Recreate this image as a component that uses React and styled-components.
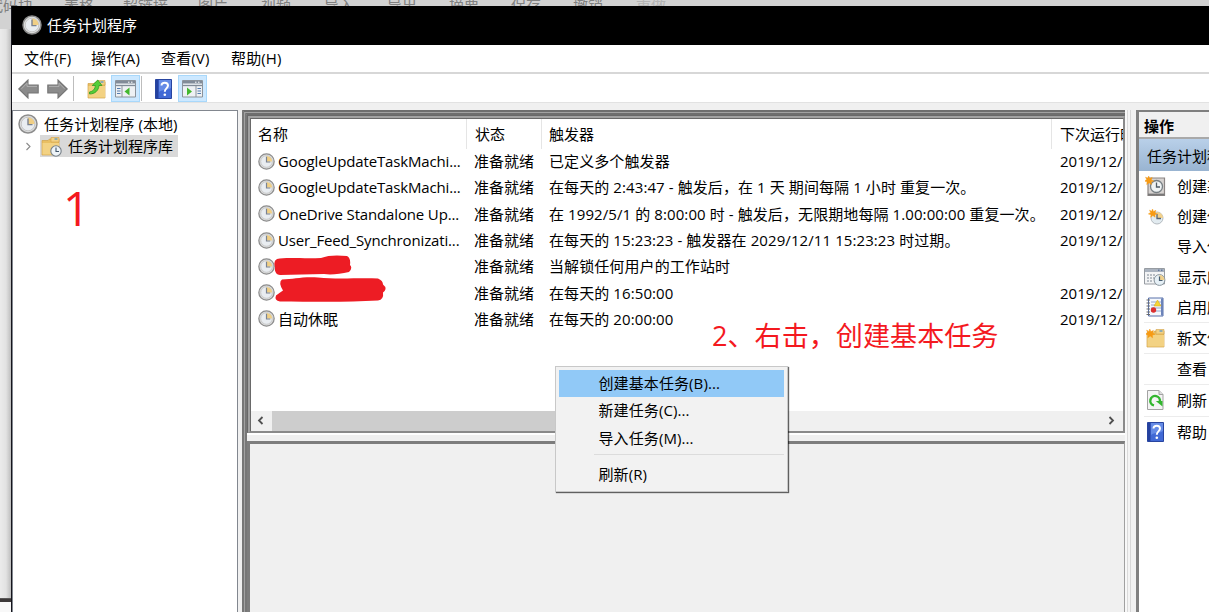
import React from 'react';
import styled, { createGlobalStyle } from 'styled-components';

const GlobalStyle = createGlobalStyle`
  * {
    box-sizing: border-box;
  }

  body {
    margin: 0;
    overflow: hidden;
    font-family: 'Open Sans', 'Noto Sans CJK SC', sans-serif;
    font-size: 15px;
    line-height: 20px;
    color: #000;
  }
`;

const Desktop = styled.div`
  position: relative;
  width: 1209px;
  height: 612px;
  padding: 6px 0 0 11px;
  overflow: hidden;
  background: linear-gradient(#d2d2d2, #d2d2d2) 0 0 / 100% 29px no-repeat,
    linear-gradient(transparent 598px, #777 598px, #3c3838 599px, #3c3838 602px, #f8f8f8 602px),
    linear-gradient(90deg, #ebebeb 0, #e2e2e2 6px, #bdbdbd 11px);
`;

const Backdrop = styled.div`
  position: absolute;
  top: -5px;
  left: ${({ left }) => left}px;
  color: ${({ faded }) => (faded ? '#b4b4b4' : '#808080')};
  white-space: nowrap;
`;

const Window = styled.div`
  position: relative;
  display: flex;
  flex-direction: column;
  height: 606px;
  border-left: 1px solid #15151c;
  background: #f0f0f0;
`;

const TitleBar = styled.header`
  display: flex;
  align-items: center;
  gap: 5px;
  flex: 0 0 39px;
  padding: 0 0 2px 10px;
  background: #000;
  color: #fff;
`;

const MenuBar = styled.nav`
  display: flex;
  align-items: center;
  gap: 20px;
  flex: 0 0 29px;
  padding: 0 0 1px 12px;
  background: #fff;
  border-bottom: 2px solid #d7d7d7;
`;

const MenuItem = styled.span`
  width: ${({ width }) => width}px;
  white-space: nowrap;
  letter-spacing: 0.15px;
`;

const Toolbar = styled.div`
  display: flex;
  align-items: center;
  flex: 0 0 29px;
  padding: 1px 0 0 6px;
  background: #fff;
  border-bottom: 1px solid #e2e2e2;

  svg {
    display: block;
    flex: none;
  }
`;

const ToolButton = styled.span`
  display: flex;
  align-items: center;
  justify-content: center;
  width: ${({ width }) => width || 29}px;
  height: 27px;
  border: 1px solid ${({ active }) => (active ? '#a8d8fb' : 'transparent')};
  background: ${({ active }) => (active ? '#cce8ff' : 'transparent')};
`;

const ArrowPair = styled.span`
  display: flex;
  gap: 8px;
`;

const ToolDivider = styled.span`
  width: 1px;
  height: 25px;
  margin: 0 ${({ right }) => right}px 0 ${({ left }) => left}px;
  background: #bdbdbd;
`;

const Panels = styled.main`
  display: flex;
  flex: 1;
  padding-top: 7px;
  min-height: 0;
`;

const Tree = styled.aside`
  flex: 0 0 226px;
  margin-right: 4px;
  border: 1px solid #82878f;
  border-bottom: 0;
  background: #fff;
  padding: 1px 0 0 5px;
`;

const TreeRoot = styled.div`
  display: flex;
  align-items: center;
  gap: 6px;
  height: 23px;
  letter-spacing: 0.08px;
`;

const TreeRow = styled.div`
  display: flex;
  align-items: center;
  height: 22px;
  padding-left: 6px;
`;

const TreeLabel = styled.span`
  display: flex;
  align-items: center;
  gap: 6px;
  height: 22px;
  width: 138px;
  margin-left: 7px;
  padding-left: 1px;
  background: #d9d9d9;
  white-space: nowrap;
`;

const Center = styled.section`
  display: flex;
  flex-direction: column;
  flex: 0 0 883px;
  border-left: 5px double #777;
  border-top: 5px double #6e6e6e;
  background: #a2a2a2;
`;

const Sash = styled.div`
  flex: 0 0 11px;
  background: linear-gradient(
    90deg,
    #f8f8f8 2px,
    #dadada 2px,
    #dadada 3px,
    #f4f4f4 3px,
    #f4f4f4 5px,
    #d6d6d6 5px,
    #d6d6d6 6px,
    #f0f0f0 6px
  );
`;

const ListFrame = styled.div`
  display: flex;
  flex-direction: column;
  flex: 0 0 318px;
  border: 2px solid #8a8a8a;
  border-width: 4px 2px 2px 4px;
  border-top: 4px double #696969;
  border-left: 4px double #696969;
  background: #fff padding-box;
`;

const Columns = styled.div`
  display: grid;
  grid-template-columns: 216px 75px 510px 1fr;
  height: ${({ head }) => (head ? '30px' : '26.3px')};
  align-items: center;
  overflow: hidden;
`;

const HeadCell = styled.div`
  height: 30px;
  padding: 5px 0 0 ${({ inset }) => inset || 7}px;
  border-right: 1px solid #e5e5e5;
  white-space: nowrap;
  overflow: hidden;

  &:last-child {
    border-right: 0;
  }
`;

const Cell = styled.div`
  display: flex;
  align-items: center;
  gap: 3px;
  padding-left: ${({ inset }) => inset || 7}px;
  white-space: nowrap;
  overflow: hidden;
  letter-spacing: ${({ spacing }) => spacing || 0}px;

  svg {
    flex: none;
  }
`;

const Rows = styled.div`
  flex: 1;
  margin-top: -1px;
  overflow: hidden;
`;

const ScrollBar = styled.div`
  display: flex;
  align-items: center;
  height: 20px;
  background: #f0f0f0;
`;

const ScrollArrow = styled.span`
  display: flex;
  justify-content: center;
  width: 21px;
  padding: 0 2px 2px 0;
`;

const Thumb = styled.span`
  width: 420px;
  height: 20px;
  margin-right: auto;
  background: #cdcdcd;
`;

const Splitter = styled.div`
  flex: 0 0 8px;
  background: #f0f0f0;
  border-top: 2px solid #fff;
`;

const Detail = styled.div`
  flex: 1;
  border: 3px solid #7d7d7d;
  border-width: 3px 1px 0 3px;
  border-right-color: #a0a0a0;
  background: #f0f0f0;
`;

const Actions = styled.aside`
  flex: 1;
  border: 2px solid #7f7f7f;
  border-width: 2px 0 0 3px;
  background: #fff;
  overflow: hidden;
  min-width: 0;
`;

const ActionsHead = styled.div`
  height: 27px;
  padding: 4px 0 0 5px;
  background: #f0f0f0;
  border-bottom: 2px solid #a9a9a9;
  font-weight: 700;
`;

const ActionsTitle = styled.div`
  height: 32px;
  padding: 7px 0 0 8px;
  background: linear-gradient(#b9d0e9, #99b4d1);
  white-space: nowrap;
`;

const ActionRow = styled.div`
  display: flex;
  align-items: center;
  height: ${({ ruled }) => (ruled ? '31.2px' : '30.2px')};
  margin-left: 5px;
  border-top: ${({ ruled }) => (ruled ? '1px solid #ececec' : '0')};
  white-space: nowrap;
`;

const ActionIcon = styled.span`
  display: flex;
  justify-content: center;
  flex: 0 0 22px;
  margin-right: 11px;
`;

const ContextMenu = styled.div`
  position: absolute;
  left: 543px;
  top: 360px;
  width: 233px;
  height: 126px;
  padding: 3px;
  border: 1px solid #c8c8c8;
  background: #f2f2f2;
  box-shadow: 1px 1px 1px rgba(0, 0, 0, 0.6);
`;

const ContextItem = styled.div`
  height: 27.4px;
  padding: 3px 0 0 39.5px;
  background: ${({ active }) => (active ? '#91c9f7' : 'transparent')};
  letter-spacing: 0.1px;
`;

const ContextRule = styled.div`
  height: 1px;
  margin: 2px 0 6px 35px;
  background: #dcdcdc;
`;

const Note = styled.div`
  position: absolute;
  left: ${({ x }) => x}px;
  top: ${({ y }) => y}px;
  color: #f4191f;
  font-size: ${({ size }) => size}px;
  line-height: 1;
  white-space: nowrap;
`;

const Scribble = styled.svg`
  position: absolute;
  left: 262px;
  top: 248px;
`;

const ClockIcon = ({ size = 17 }) => (
  <svg width={size} height={size} viewBox="0 0 20 20">
    <circle cx="10" cy="10" r="9" fill="#dedfdf" stroke="#8d8d8d" strokeWidth="1.5" />
    <circle cx="10" cy="10" r="6.8" fill="#e9edf1" stroke="#bcbcbc" strokeWidth="0.8" />
    <path d="M10 10V3.4A6.6 6.6 0 0 1 16.6 10z" fill="#f0cf85" />
    <path d="M10 4.5V10.6H14.5" fill="none" stroke="#7a8290" strokeWidth="1.4" />
  </svg>
);

const ArrowIcon = ({ flip }) => (
  <svg width="21" height="20" viewBox="0 0 21 20">
    <path
      d="M0.8 10L10 1V6H20.2V14H10V19z"
      transform={flip ? 'translate(21 0) scale(-1 1)' : undefined}
      fill="#8b8b8b"
      stroke="#757575"
      strokeWidth="1.1"
    />
    <path
      d="M3.5 9.8L9 4.2V7.4H19"
      transform={flip ? 'translate(21 0) scale(-1 1)' : undefined}
      fill="none"
      stroke="#b0b0b0"
      strokeWidth="1"
    />
  </svg>
);

const Folder = () => (
  <>
    <path d="M1 4.5H7L8.5 3H18V19H1z" fill="#e9bf62" stroke="#d1a24a" strokeWidth="0.7" />
    <path d="M10 1.5H18V6H10z" fill="#f2d184" stroke="#d1a24a" strokeWidth="0.6" />
    <path d="M13.5 3H16.5" stroke="#4a93d1" strokeWidth="1.2" />
    <path d="M1.5 7H18V18.5H1.5z" fill="#f3d283" />
  </>
);

const UpFolderIcon = () => (
  <svg width="20" height="20" viewBox="0 0 20 20">
    <Folder />
    <path
      d="M2.5 13C6 12.5 8.2 10 8.4 6.5H5.2L10.8 1L15 6.5H12C11.6 11.5 8 15 2.5 15z"
      fill="#55ce38"
      stroke="#319c24"
      strokeWidth="0.8"
    />
  </svg>
);

const LibraryIcon = () => (
  <svg width="21" height="21" viewBox="0 0 21 21">
    <Folder />
    <circle cx="15" cy="15" r="5.2" fill="#edf3f7" stroke="#778089" strokeWidth="1.1" />
    <path d="M15 11.5V15.5H18" fill="none" stroke="#40556b" strokeWidth="1.1" />
  </svg>
);

const PaneIcon = ({ right }) => (
  <svg width="21" height="18" viewBox="0 0 21 18">
    <path d="M0.5 0.5H20.5V17H0.5z" fill="#eef1f4" stroke="#8c939b" />
    <path d="M1 1H20V3.5H1z" fill="#818b98" />
    <path d="M13 2.2H14.5M16 2.2H17.5" stroke="#fff" />
    <path d="M1 5.5H20" stroke="#818b98" strokeWidth="1.3" />
    <path d={right ? 'M14 6V17' : 'M7 6V17'} stroke="#8c939b" />
    <path
      d={right ? 'M15.5 8.5H19M15.5 11H19M15.5 13.5H19' : 'M2 8.5H5.5M2 11H5.5M2 13.5H5.5'}
      stroke="#547cae"
      strokeWidth="1.2"
    />
    <path d={right ? 'M5 7.5V15.5L10 11.5z' : 'M14.5 7.5V15.5L9.5 11.5z'} fill="#43b82e" />
  </svg>
);

const HelpIcon = () => (
  <svg width="17" height="20" viewBox="0 0 17 20">
    <path d="M0.5 0.5H16.5V19.5H0.5z" fill="#4169d5" stroke="#2845a0" />
    <path d="M1 1H3.5V19H1z" fill="#24419f" />
    <path d="M4 1H16V9C11 12 8 10 4 13z" fill="#658be6" />
    <path
      d="M6.5 6.5C6.5 2.7 13 2.8 13 6.5C13 9.5 9.8 9.3 9.8 12.7"
      fill="none"
      stroke="#fff"
      strokeWidth="2"
    />
    <circle cx="9.8" cy="15.7" r="1.3" fill="#fff" />
  </svg>
);

const Spark = () => (
  <path
    d="M6 0L7.3 3.2L10.5 1.8L9.3 5L12.5 6.5L9.2 7.5L9.5 11L6.5 8.8L3.5 11L4 7.5L0.5 6.5L3.5 4.5L2 1.5L5 3z"
    fill="#f79a13"
    stroke="#f79a13"
    strokeWidth="0.6"
  />
);

const BasicTaskIcon = () => (
  <svg width="21" height="21" viewBox="0 0 21 21">
    <path d="M3 2H19.5V19.5H3z" fill="#d7d3d1" stroke="#8b8584" strokeWidth="1.2" />
    <path d="M3 18.5H19.5" stroke="#777" strokeWidth="1.8" />
    <circle cx="11.5" cy="10.5" r="6" fill="#eff3f4" stroke="#777f83" strokeWidth="1.3" />
    <path d="M11.5 6.5V11H15" fill="none" stroke="#4f5b65" strokeWidth="1.3" />
    <g transform="translate(-1 0) scale(0.78)">
      <Spark />
    </g>
  </svg>
);

const TaskIcon = () => (
  <svg width="17" height="17" viewBox="0 0 17 17">
    <circle cx="10" cy="10" r="6" fill="#e2ebf0" stroke="#b4bbc0" />
    <path d="M10 10V4A6 6 0 0 1 16 10z" fill="#f4d28b" />
    <path d="M10 6V10.5H14" fill="none" stroke="#566573" strokeWidth="1.3" />
    <g transform="translate(1 1) scale(0.75)">
      <Spark />
    </g>
  </svg>
);

const RunningIcon = () => (
  <svg width="22" height="20" viewBox="0 0 22 20">
    <path d="M0.5 1.5H20.5V17H0.5z" fill="#f3f4f5" stroke="#979ca2" />
    <path d="M1 2H20V5H1z" fill="#aab3bf" />
    <path d="M14 3.2H15.5M17 3.2H18.5" stroke="#405e90" />
    <path d="M3 8H11M3 11H10M3 14H9" stroke="#7f8893" strokeDasharray="2 1" />
    <circle cx="15.5" cy="13" r="5.4" fill="#e6f0f6" stroke="#87939b" />
    <path d="M15.5 13V8A5 5 0 0 1 20.5 13z" fill="#efd08c" />
    <path d="M15.5 9.5V13.5H18.5" fill="none" stroke="#465d70" strokeWidth="1.2" />
  </svg>
);

const HistoryIcon = () => (
  <svg width="18" height="20" viewBox="0 0 18 20">
    <path d="M2.5 1H17V19H2.5z" fill="#f5f8fd" stroke="#5870aa" />
    <path d="M5 5H16M5 8H16M5 11H16M5 14H16" stroke="#94a7cc" />
    <path d="M15 18.5V1.5H17V18.5z" fill="#6b83ba" />
    <path d="M0.5 3H4M0.5 6H4M0.5 9H4M0.5 12H4M0.5 15H4M0.5 17.5H4" stroke="#6a6a6a" strokeWidth="1.1" />
    <path d="M11.5 3L15 9H8z" fill="#f6d535" stroke="#d8af21" strokeWidth="0.6" />
    <circle cx="7.5" cy="13" r="2.7" fill="#dc3030" />
  </svg>
);

const NewFolderIcon = () => (
  <svg width="19" height="20" viewBox="0 0 19 20">
    <Folder />
    <g transform="translate(-1 1) scale(0.8)">
      <Spark />
    </g>
  </svg>
);

const RefreshIcon = () => (
  <svg width="17" height="20" viewBox="0 0 17 20">
    <path d="M0.5 0.5H12L16 4.5V19.5H0.5z" fill="#f4f4f4" stroke="#a2a2a2" />
    <path d="M12 0.5V4.5H16" fill="#ddd" stroke="#a2a2a2" />
    <path d="M7 15.4A4.8 4.8 0 1 1 12.8 11.8" fill="none" stroke="#32b62e" strokeWidth="2.4" />
    <path d="M8.8 11H15.5V16.5z" fill="#32b62e" />
  </svg>
);

const Chevron = ({ flip, size = 9, color = '#505050', weight = 1.8 }) => (
  <svg width={size} height={size} viewBox="0 0 9 9">
    <path d={flip ? 'M6.5 1L3 4.5L6.5 8' : 'M2.5 1L6 4.5L2.5 8'} fill="none" stroke={color} strokeWidth={weight} />
  </svg>
);

const backdropWords = [
  ['代码块', -12],
  ['表格', 64],
  ['超链接', 123],
  ['图片', 198],
  ['视频', 261],
  ['导入', 324],
  ['导出', 387],
  ['摘要', 449],
  ['保存', 511],
  ['撤销', 573],
  ['重做', 636],
];

const menus = [
  ['文件(F)', 47],
  ['操作(A)', 50],
  ['查看(V)', 50],
  ['帮助(H)', 52],
];

const tasks = [
  ['GoogleUpdateTaskMachi...', '已定义多个触发器', true],
  ['GoogleUpdateTaskMachi...', '在每天的 2:43:47 - 触发后，在 1 天 期间每隔 1 小时 重复一次。', true],
  ['OneDrive Standalone Up...', '在 1992/5/1 的 8:00:00 时 - 触发后，无限期地每隔 1.00:00:00 重复一次。', true],
  ['User_Feed_Synchronizati...', '在每天的 15:23:23 - 触发器在 2029/12/11 15:23:23 时过期。', true],
  ['', '当解锁任何用户的工作站时', false],
  ['', '在每天的 16:50:00', true],
  ['自动休眠', '在每天的 20:00:00', true],
];

const actions = [
  ['创建基本任务...', BasicTaskIcon],
  ['创建任务...', TaskIcon],
  ['导入任务...', null],
  ['显示所有正在运行的任务', RunningIcon],
  ['启用所有任务历史记录', HistoryIcon],
  ['新文件夹...', NewFolderIcon, true],
  ['查看', null, true],
  ['刷新', RefreshIcon, true],
  ['帮助', HelpIcon, true],
];

const TaskList = () => (
  <ListFrame>
    <Columns head>
      <HeadCell>名称</HeadCell>
      <HeadCell inset={8}>状态</HeadCell>
      <HeadCell>触发器</HeadCell>
      <HeadCell inset={8}>下次运行时间</HeadCell>
    </Columns>
    <Rows>
      {tasks.map(([name, trigger, next], i) => (
        <Columns key={i}>
          <Cell spacing={name.startsWith('自') ? 0 : -0.15}>
            <ClockIcon />
            {name}
          </Cell>
          <Cell>准备就绪</Cell>
          <Cell spacing={0.09}>{trigger}</Cell>
          <Cell inset={8}>{next && '2019/12/13'}</Cell>
        </Columns>
      ))}
    </Rows>
    <ScrollBar>
      <ScrollArrow>
        <Chevron flip />
      </ScrollArrow>
      <Thumb />
      <ScrollArrow>
        <Chevron />
      </ScrollArrow>
    </ScrollBar>
  </ListFrame>
);

const ActionsPane = () => (
  <Actions>
    <ActionsHead>操作</ActionsHead>
    <ActionsTitle>任务计划程序库</ActionsTitle>
    {actions.map(([label, Glyph, ruled]) => (
      <ActionRow key={label} ruled={ruled}>
        <ActionIcon>{Glyph && <Glyph />}</ActionIcon>
        {label}
      </ActionRow>
    ))}
  </Actions>
);

const App = () => (
  <Desktop lang="zh-CN">
    <GlobalStyle />
    {backdropWords.map(([word, left]) => (
      <Backdrop key={word} left={left} faded={word === '重做'}>
        {word}
      </Backdrop>
    ))}
    <Window>
      <TitleBar>
        <ClockIcon size={20} />
        任务计划程序
      </TitleBar>
      <MenuBar>
        {menus.map(([label, width]) => (
          <MenuItem key={label} width={width}>
            {label}
          </MenuItem>
        ))}
      </MenuBar>
      <Toolbar>
        <ArrowPair>
          <ArrowIcon />
          <ArrowIcon flip />
        </ArrowPair>
        <ToolDivider left={5} right={8} />
        <ToolButton>
          <UpFolderIcon />
        </ToolButton>
        <ToolButton active>
          <PaneIcon />
        </ToolButton>
        <ToolDivider left={1} right={6} />
        <ToolButton width={30}>
          <HelpIcon />
        </ToolButton>
        <ToolButton active>
          <PaneIcon right />
        </ToolButton>
      </Toolbar>
      <Panels>
        <Tree>
          <TreeRoot>
            <ClockIcon size={20} />
            任务计划程序 (本地)
          </TreeRoot>
          <TreeRow>
            <Chevron color="#8a8a8a" weight={1.1} />
            <TreeLabel>
              <LibraryIcon />
              任务计划程序库
            </TreeLabel>
          </TreeRow>
        </Tree>
        <Center>
          <TaskList />
          <Splitter />
          <Detail />
        </Center>
        <Sash />
        <ActionsPane />
      </Panels>
      <Scribble width="115" height="50" viewBox="0 0 115 50">
        <path
          d="M3 5C12 3 31 5 47 4C54 1 64 1 73 2Q77 4 76 11Q79 14 75 18C66 20 57 21 50 20L6 21Q0 20 1 13Q-1 7 3 5z"
          fill="#ed1c24"
        />
        <path
          d="M7 25C19 25 26 22 43 23C63 25 86 23 103 24Q108 26 108 30Q113 34 108 38Q109 45 103 46C70 48 34 47 5 47Q-1 46 1 41Q5 38 8 36Q3 28 7 25z"
          fill="#ed1c24"
          transform="translate(1 0.5)"
        />
      </Scribble>
      <Note x={51} y={179} size={47}>
        1
      </Note>
      <Note x={700} y={316} size={27.1}>
        2、右击，创建基本任务
      </Note>
      <ContextMenu>
        <ContextItem active>创建基本任务(B)...</ContextItem>
        <ContextItem>新建任务(C)...</ContextItem>
        <ContextItem>导入任务(M)...</ContextItem>
        <ContextRule />
        <ContextItem>刷新(R)</ContextItem>
      </ContextMenu>
    </Window>
  </Desktop>
);

export default App;
